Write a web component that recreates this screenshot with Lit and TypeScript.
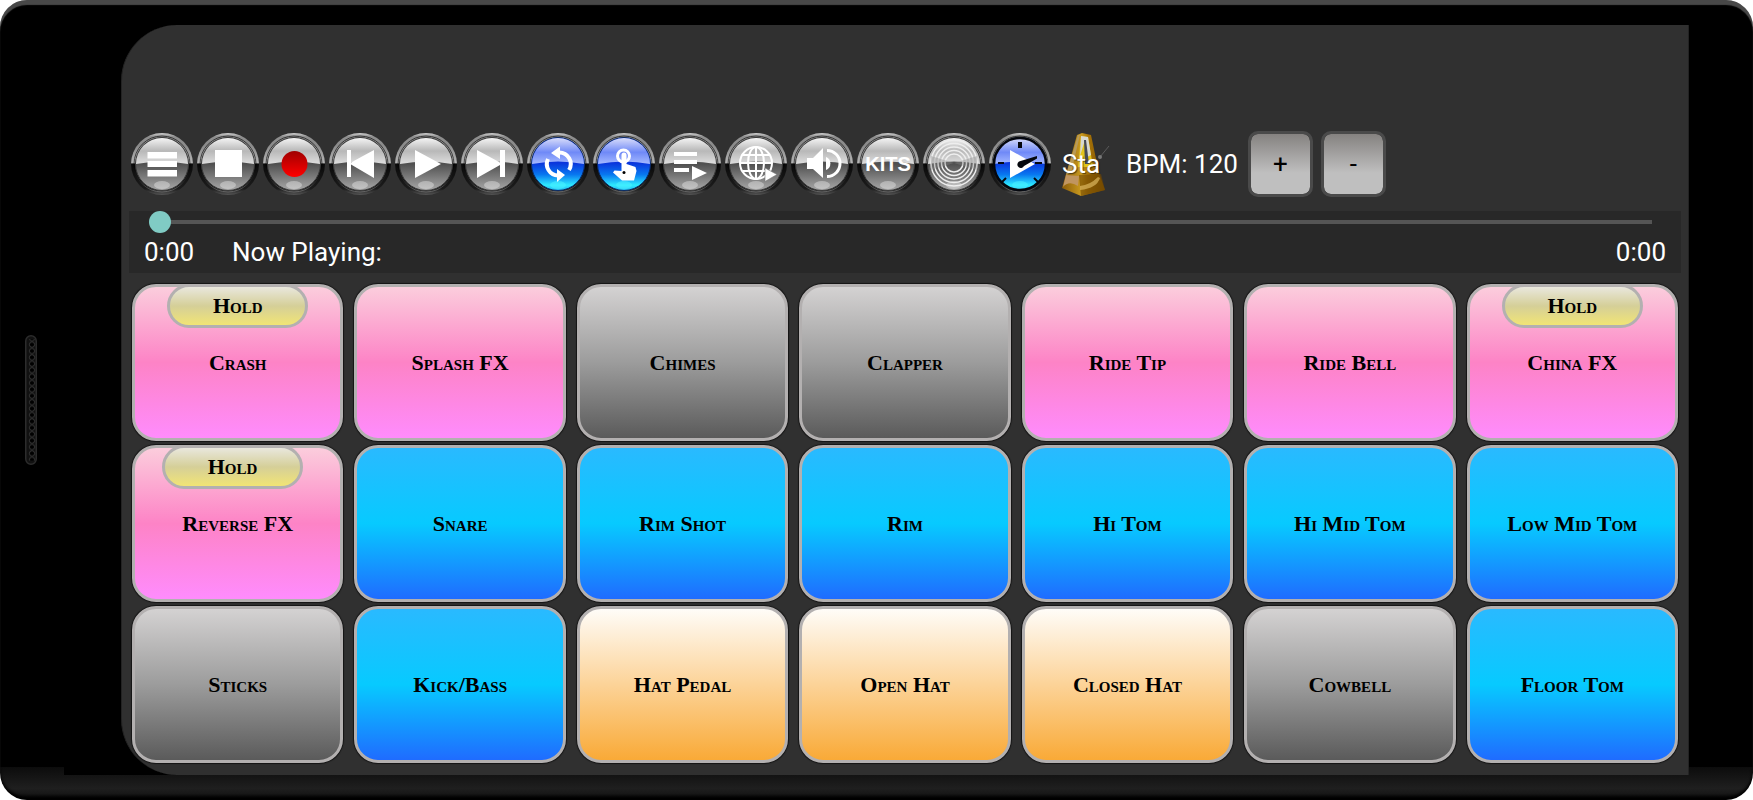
import { LitElement, html, svg, css, TemplateResult } from "lit";
import { customElement, property, state } from "lit/decorators.js";
import { classMap } from "lit/directives/class-map.js";

type Hold = "center" | "start";
interface Pad {
  name: string;
  tone: "pink" | "grey" | "blue" | "amber";
  hold?: Hold;
}

const PADS: Pad[] = [
  { name: "Crash", tone: "pink", hold: "center" },
  { name: "Splash FX", tone: "pink" },
  { name: "Chimes", tone: "grey" },
  { name: "Clapper", tone: "grey" },
  { name: "Ride Tip", tone: "pink" },
  { name: "Ride Bell", tone: "pink" },
  { name: "China FX", tone: "pink", hold: "center" },
  { name: "Reverse FX", tone: "pink", hold: "start" },
  { name: "Snare", tone: "blue" },
  { name: "Rim Shot", tone: "blue" },
  { name: "Rim", tone: "blue" },
  { name: "Hi Tom", tone: "blue" },
  { name: "Hi Mid Tom", tone: "blue" },
  { name: "Low Mid Tom", tone: "blue" },
  { name: "Sticks", tone: "grey" },
  { name: "Kick/Bass", tone: "blue" },
  { name: "Hat Pedal", tone: "amber" },
  { name: "Open Hat", tone: "amber" },
  { name: "Closed Hat", tone: "amber" },
  { name: "Cowbell", tone: "grey" },
  { name: "Floor Tom", tone: "blue" },
];

interface Tool {
  label: string;
  face?: "blue";
  glyph: TemplateResult;
}

const TOOLS: Tool[] = [
  {
    label: "Menu",
    glyph: svg`<path fill="#fff" d="M16.500 20h29.500v6.500H16.500zM16.500 29h29.500v6H16.500zM16.500 38h29.500v6.500H16.500z"/>`,
  },
  { label: "Stop", glyph: svg`<path fill="#fff" d="M18 18h27v27H18z"/>` },
  { label: "Record", glyph: svg`<circle cx="31.500" cy="32" r="13" fill="url(#rec)"/>` },
  {
    label: "Previous",
    glyph: svg`<path fill="#fff" d="M18 18h4v12.500L45 18v28L22 32.500V45h-4z"/>`,
  },
  { label: "Play", glyph: svg`<path fill="#fff" d="M20 18l26 14-26 14z"/>` },
  {
    label: "Next",
    glyph: svg`<path fill="#fff" d="M16 18l23 12.500V18h5v27h-5V33L16 46z"/>`,
  },
  {
    label: "Loop",
    face: "blue",
    glyph: svg`<g fill="none" stroke="#fff" stroke-width="4">
        <path d="M32 20.500A11.500 11.500 0 0 1 42 38"/><path d="M21 27A11.500 11.500 0 0 0 31 43.500"/></g>
      <path fill="#fff" d="M24 21l9-6.500v12.500zM38 43l-8-6v13z"/>`,
  },
  {
    label: "Touch mode",
    face: "blue",
    glyph: svg`<circle cx="30.500" cy="24" r="6" fill="none" stroke="#fff" stroke-width="3"/>
      <path fill="#fff" d="M28.500 23a2.500 2.500 0 0 1 5 0v9l9 3 1 4-2.500 9.500H29l-9-8 1.500-2 7 .5z"/>
      <circle cx="31" cy="40.500" r="1.500"/>`,
  },
  {
    label: "Playlist",
    glyph: svg`<path fill="#fff" d="M15 20h23v4H15zM15 28h23v4H15zM15 36h15v4H15zM33 34l15 7-15 7z"/>`,
  },
  {
    label: "Online",
    glyph: svg`<g fill="none" stroke="#fff" stroke-width="2">
        <circle cx="31" cy="31" r="16"/><ellipse cx="31" cy="31" rx="8" ry="16"/>
        <path d="M31 15v32M15 31h32M18 23h26M18 39h26"/></g>
      <path fill="#fff" stroke="#777" stroke-width=".6" d="M40 36l12 6.500-12 7z"/>`,
  },
  {
    label: "Volume",
    glyph: svg`<path fill="#fff" d="M16 26h6l10-10v30L22 37h-6z"/>
      <path d="M35 25a7 7 0 0 1 0 13z" fill="#fff"/>
      <path d="M36 18.500a13 13 0 0 1 0 26" fill="none" stroke="#fff" stroke-width="3"/>`,
  },
  {
    label: "Kits",
    glyph: svg`<text class="kits" x="31" y="39" text-anchor="middle">KITS</text>`,
  },
  {
    label: "Cymbal",
    glyph: svg`<g fill="none" stroke="#eee" stroke-width="1.500">
        ${[9, 12.5, 16, 19.5, 23].map((r) => svg`<circle cx="31" cy="31" r=${r}/>`)}</g>
      <path d="M31 31L8 24v14zM31 31l23-7v14z" fill="#888" opacity=".4"/>`,
  },
  {
    label: "Timer",
    face: "blue",
    glyph: svg`<circle cx="31" cy="32" r="26" fill="none" stroke="#05070d" stroke-width="2.500"/>
      <path stroke="#05070d" stroke-width="4" d="M31 10v6"/>
      <path stroke="#05070d" stroke-width="2" d="M9 31h6M46 31h7M13 50l4-4M45 46l4 4"/>
      <path fill="#fff" d="M21 18l25 14-25 14z"/>
      <path fill="#05070d" d="M30 29.500L48 24v2.500L35 34a3.500 3.500 0 1 1-5-4.500z"/>`,
  },
];

const orb = (tool: Tool) => {
  const blue = tool.face === "blue";
  return html`<svg class="orb" viewBox="0 0 62 64" aria-hidden="true">
    <circle cx="31" cy="32" r="31" fill="url(#rim)" />
    <circle cx="31" cy="32" r="28" fill="none" stroke="url(#rim2)" stroke-width="1" />
    <circle cx="31" cy="32" r="26.500" fill=${blue ? "url(#blueLow)" : "url(#greyLow)"}
      stroke=${blue ? "#0b2a66" : "#3a3a3a"} stroke-width="1" />
    <path d="M5 33a26 26 0 0 1 52 0Q31 28 5 33z" transform="translate(0 -1)"
      fill=${blue ? "url(#blueTop)" : "url(#greyTop)"} />
    <ellipse cx="31" cy="53" rx="8" ry="4" fill=${blue ? "#50f4ff" : "#fff"} opacity=${blue ? ".5" : ".35"} />
    ${tool.glyph}
  </svg>`;
};

@customElement("drum-pad")
export class DrumPad extends LitElement {
  @property() name = "";
  @property() tone = "grey";
  @property() hold = "";

  static styles = css`
    :host {
      display: grid;
      position: relative;
      min-height: 0;
    }
    .pad,
    .pill {
      box-sizing: border-box;
      margin: 0;
      padding: 0;
      border: 3px solid #b3b0b0;
      color: #000;
      font-family: "Liberation Serif", serif;
      font-variant-caps: small-caps;
      font-weight: 700;
    }
    .pad {
      border-radius: 24px;
      box-shadow: 0 0 1px 1px #141414;
      background-origin: border-box;
      font-size: 22px;
      line-height: 28px;
    }
    .pink { background-image: linear-gradient(#fbd0dd, #fd83c6 50%, #ff8cff); }
    .grey { background-image: linear-gradient(#d6d4d4, #9c9c9c 50%, #585858); }
    .blue { background-image: linear-gradient(#2bb9ff, #07caff 50%, #2068ff); }
    .amber { background-image: linear-gradient(#fffefc, #fcd398 50%, #f9a833); }
    .overlay {
      position: absolute;
      inset: 0 0 auto 0;
      display: flex;
      padding: 0 30px;
      justify-content: center;
      pointer-events: none;
    }
    .overlay.start { justify-content: flex-start; }
    .pill {
      width: 141px;
      height: 44px;
      border-radius: 22px;
      background: linear-gradient(#ecebe8, #d5cf98 50%, #f6e86f) border-box;
      font-size: 22px;
      line-height: 28px;
      pointer-events: auto;
    }
  `;

  render() {
    return html`
      <button class=${classMap({ pad: true, [this.tone]: true })}>${this.name}</button>
      ${this.hold
        ? html`<div class=${classMap({ overlay: true, start: this.hold === "start" })}>
            <button class="pill">Hold</button>
          </div>`
        : null}
    `;
  }
}

@customElement("app-root")
export class AppRoot extends LitElement {
  @state() private bpm = 120;

  static styles = css`
    :host {
      display: block;
      background: #fff;
      font-family: Roboto, sans-serif;
      color: #fff;
    }
    .device {
      box-sizing: border-box;
      position: relative;
      display: grid;
      grid-template-columns: 121px minmax(0, 1fr) 64px;
      min-height: 100vh;
      padding: 25px 0;
      border-radius: 27px;
      overflow: hidden;
      background:
        linear-gradient(#000, #000) 64px calc(100% - 25px) / 120px 8px no-repeat,
        linear-gradient(#0c0c0c, #1f1f1f 65%, #181818 80%, #000) 0 100% / 100% 33px no-repeat,
        #000;
      box-shadow: inset 0 5px 1px #484848, inset 0 -3px 3px #000;
    }
    .bezel {
      display: flex;
      align-items: center;
      padding-left: 25px;
    }
    .speaker { display: block; width: 12px; height: 130px; }
    .screen {
      box-sizing: border-box;
      display: flex;
      flex-direction: column;
      padding: 106px 7px 12px;
      border: solid #232323;
      border-width: 0 1px;
      border-radius: 56px 0 0 56px;
      background: #303030;
    }
    .toolbar {
      display: flex;
      align-items: center;
      gap: 4px;
      height: 66px;
      margin-bottom: 14px;
      padding-left: 2px;
    }
    .tool {
      flex: none;
      width: 62px;
      height: 64px;
      padding: 0;
      border: 0;
      background: none;
      font: inherit;
      color: inherit;
    }
    .orb { display: block; width: 62px; height: 64px; }
    .defs { position: absolute; width: 0; height: 0; }
    .kits {
      font: 700 20px "Liberation Sans", sans-serif;
      fill: #fff;
    }
    .metronome { display: grid; }
    .metronome > * { grid-area: 1 / 1; }
    .metronome-text {
      width: 39px;
      margin-left: 7px;
      align-self: center;
      overflow: hidden;
      white-space: nowrap;
      text-align: left;
      font-size: 26px;
      line-height: 30px;
      text-shadow: 1px 1px 1px #0008;
    }
    .bpm {
      margin: 0 6px 0 5px;
      font-size: 26px;
      line-height: 30px;
      white-space: nowrap;
    }
    .step {
      box-sizing: border-box;
      width: 65px;
      height: 66px;
      margin-right: 4px;
      padding: 0;
      border: 3px solid #4a4a4a;
      border-radius: 10px;
      background: linear-gradient(#858280, #bfbfbf 65%) padding-box;
      color: #000;
      font: 26px/30px Roboto, sans-serif;
    }
    .player {
      padding-bottom: 6px;
      margin-bottom: 11px;
      background: #282828;
    }
    .seek {
      display: block;
      box-sizing: border-box;
      width: calc(100% - 38px);
      height: 22px;
      margin: 0 18px 4px 20px;
      appearance: none;
      background: linear-gradient(#555, #555) center / calc(100% - 22px) 4px no-repeat;
    }
    .seek::-webkit-slider-thumb {
      appearance: none;
      width: 22px;
      height: 22px;
      border-radius: 50%;
      background: #80cbc4;
    }
    .status {
      display: flex;
      padding: 0 15px;
      font-size: 26px;
      line-height: 30px;
    }
    .elapsed { width: 88px; }
    .title { flex: 1; }
    .pads {
      flex: 1;
      display: grid;
      grid-template-columns: repeat(7, minmax(0, 1fr));
      grid-auto-rows: minmax(80px, 1fr);
      gap: 4px 11px;
      padding: 0 3px;
    }
  `;

  render() {
    return html`
      <svg class="defs" aria-hidden="true">
        <defs>
          <linearGradient id="rim" x2="0" y2="1">
            <stop offset="0" stop-color="#d0d0d0" /><stop offset=".06" stop-color="#8e8e8e" />
            <stop offset=".2" stop-color="#8a8a8a" />
            <stop offset=".48" stop-color="#b4b4b4" /><stop offset=".5" stop-color="#0a0a0a" />
            <stop offset=".9" stop-color="#1c1c1c" /><stop offset="1" stop-color="#555" />
          </linearGradient>
          <linearGradient id="rim2" x2="0" y2="1">
            <stop offset="0" stop-color="#333" /><stop offset=".48" stop-color="#444" />
            <stop offset=".5" stop-color="#000" /><stop offset=".8" stop-color="#222" />
            <stop offset="1" stop-color="#666" />
          </linearGradient>
          <linearGradient id="greyTop" x2="0" y2="1">
            <stop offset="0" stop-color="#f4f4f4" /><stop offset=".5" stop-color="#b8b8b8" />
            <stop offset="1" stop-color="#dedede" />
          </linearGradient>
          <linearGradient id="greyLow" x2="0" y2="1">
            <stop offset=".5" stop-color="#505050" /><stop offset=".8" stop-color="#858585" />
            <stop offset="1" stop-color="#a8a8a8" />
          </linearGradient>
          <linearGradient id="blueTop" x2="0" y2="1">
            <stop offset="0" stop-color="#d8dcfa" /><stop offset=".55" stop-color="#6f89f7" />
            <stop offset="1" stop-color="#a5b9ff" />
          </linearGradient>
          <linearGradient id="blueLow" x2="0" y2="1">
            <stop offset=".48" stop-color="#0a35dc" /><stop offset=".7" stop-color="#0878f0" />
            <stop offset=".9" stop-color="#2eeaff" /><stop offset="1" stop-color="#22b8f0" />
          </linearGradient>
          <linearGradient id="rec" x2="0" y2="1">
            <stop offset="0" stop-color="#a00000" /><stop offset="1" stop-color="#ff0000" />
          </linearGradient>
          <linearGradient id="gold">
            <stop offset="0" stop-color="#8a5c08" /><stop offset=".45" stop-color="#c99a20" />
            <stop offset=".6" stop-color="#a87408" /><stop offset="1" stop-color="#7d5000" />
          </linearGradient>
          <pattern id="holes" width="12" height="6.400" patternUnits="userSpaceOnUse">
            <circle cx="7" cy="3.200" r="2.600" fill="#000" stroke="#3a3a3a" stroke-width=".9" />
          </pattern>
        </defs>
      </svg>
      <div class="device">
        <div class="bezel">
          <svg class="speaker" viewBox="0 0 12 130" aria-hidden="true">
            <rect x=".75" y=".75" width="10.500" height="128.500" rx="5.250" fill="#111" stroke="#2c2c2c" stroke-width="1.500" />
            <rect y="4" width="12" height="121.600" fill="url(#holes)" />
          </svg>
        </div>
        <main class="screen">
          <div class="toolbar" role="toolbar">
            ${TOOLS.map((t) => html`<button class="tool" aria-label=${t.label}>${orb(t)}</button>`)}
            <button class="tool metronome">
              <svg class="orb" viewBox="0 0 62 64" aria-hidden="true">
                <path fill="url(#gold)" d="M22 3l5-2 9 2 8 38 6 17-24 6-19-8 4-14z" />
                <path fill="#b89a58" d="M23 3l2 0-9 38-5 2z" />
                <path fill="#e2c41c" d="M26 4l7 1 5 30-15 0z" />
                <path fill="#d8d8d0" d="M26 4l7 1 3 18-4 2-2-17-5 16z" />
                <path fill="#464a55" d="M29 8h2l3 24h-4z" />
                <path fill="#6f4600" d="M24 43l22-1 4 16-24 6z" opacity=".6" />
                <path fill="#c09560" d="M11 43l13 1-1 10Q14 48 8 55z" />
                <path fill="#dcb660" d="M25 54q10-1 18-9l2 1q-3 10-20 12z" opacity=".7" />
                <path stroke="#5a5a5a" stroke-width="1" d="M54 14l-9 11" />
                <circle cx="45" cy="25" r="2" fill="#777" />
              </svg>
              <span class="metronome-text">Sta</span>
            </button>
            <span class="bpm">BPM: ${this.bpm}</span>
            <button class="step" aria-label="Increase BPM" @click=${() => this.bpm++}>+</button>
            <button class="step" aria-label="Decrease BPM" @click=${() => this.bpm--}>-</button>
          </div>
          <section class="player">
            <input class="seek" type="range" min="0" max="100" .value=${"0"} aria-label="Position" />
            <div class="status">
              <span class="elapsed">0:00</span>
              <span class="title">Now Playing:</span>
              <span>0:00</span>
            </div>
          </section>
          <section class="pads">
            ${PADS.map(
              (p) => html`<drum-pad .name=${p.name} .tone=${p.tone} .hold=${p.hold ?? ""}></drum-pad>`
            )}
          </section>
        </main>
      </div>
    `;
  }
}
